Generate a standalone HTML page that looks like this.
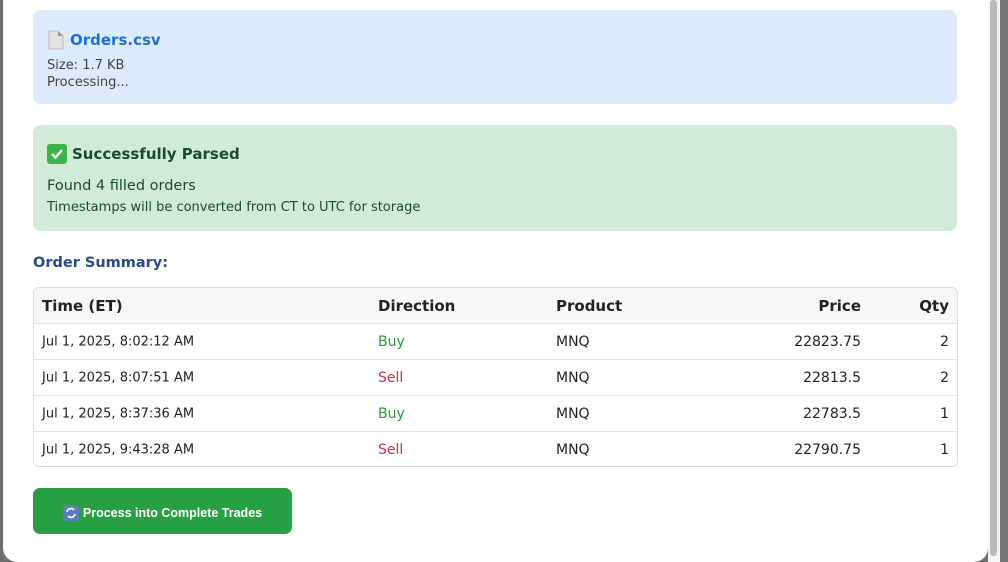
<!DOCTYPE html>
<html><head><meta charset="utf-8"><style>
*{box-sizing:border-box;margin:0;padding:0}
body{width:1008px;height:562px;overflow:hidden;background:#6e6e6e;font-family:"DejaVu Sans",Verdana,sans-serif;position:relative}
.modal{position:absolute;left:3px;top:-20px;width:985px;height:582px;background:#fff;border-radius:14px}
.sb{position:absolute;left:988px;top:0;width:12px;height:562px;background:#f4f4f4}
.sb i{position:absolute;left:2px;top:0;width:7px;height:556px;background:#b9b9b9;border-radius:4px}
.side{position:absolute;left:1000px;top:0;width:8px;height:562px;background:#777}
.blue{position:absolute;left:33px;top:10px;width:924px;height:94px;background:#dcebfb;border-radius:8px;padding:19px 14px}
.fn{font-weight:bold;color:#1f6fd0;font-size:15px;display:flex;align-items:center;gap:5px;height:22px}
.sm{font-size:13px;color:#444;line-height:17px}
.green{position:absolute;left:33px;top:125px;width:924px;height:106px;background:#d1ebd7;border-radius:8px;padding:18px 14px;color:#1c4b2a}
.gt{font-weight:bold;font-size:15px;display:flex;align-items:center;gap:5px;height:22px}
.ck{width:20px;height:20px;background:#3cb44a;border-radius:3px;display:inline-flex;align-items:center;justify-content:center}
h3{position:absolute;left:33px;top:255px;font-size:14.5px;color:#2a4a8a;font-weight:bold}
.tbl{position:absolute;left:33px;top:287px;width:925px;height:180px;border:1px solid #ddd;border-radius:6px;overflow:hidden}
.r{position:relative;height:36px;border-top:1px solid #e3e3e3;font-size:13px;color:#222}
.r:first-child{border-top:none;height:35px;background:#f6f7f8;font-weight:bold;font-size:15px}
.r span{position:absolute;top:50%;transform:translateY(-50%)}
.c1{left:8px}.c2{left:344px}.c3{left:522px}.c4{right:96px}.c5{right:8px}
.r:not(:first-child) .c2,.r:not(:first-child) .c3,.r:not(:first-child) .c4,.r:not(:first-child) .c5{font-size:14px}
.buy{color:#2a9a3a}.sell{color:#d0303c}
.btn{position:absolute;left:33px;top:488px;width:259px;height:46px;background:#27a043;border-radius:7px;color:#fff;font-weight:bold;font-size:12.5px;display:flex;align-items:center;justify-content:center;gap:4px;padding-top:4px;font-family:"Liberation Sans",Arial,sans-serif}
.ri{width:16px;height:16px;background:#5a7fb8;border-radius:3px;display:inline-flex;align-items:center;justify-content:center}
</style></head><body>
<div class="modal"></div>
<div class="sb"><i></i></div><div class="side"></div>
<div class="blue">
<div class="fn"><svg width="18" height="20" viewBox="0 0 18 20"><path d="M2 1h9l5 5v13H2z" fill="#e2e2e2" stroke="#bbb"/><path d="M11 1v5h5" fill="#999"/></svg>Orders.csv</div>
<div class="sm" style="margin-top:6px">Size: 1.7 KB</div>
<div class="sm">Processing...</div>
</div>
<div class="green">
<div class="gt"><span class="ck"><svg width="14" height="14" viewBox="0 0 14 14"><path d="M2 7l3.5 3.5L12 3" stroke="#fff" stroke-width="2.4" fill="none"/></svg></span>Successfully Parsed</div>
<div style="font-size:14.5px;margin-top:11px;line-height:20px">Found 4 filled orders</div>
<div style="font-size:13px;line-height:20px;margin-top:2px">Timestamps will be converted from CT to UTC for storage</div>
</div>
<h3>Order Summary:</h3>
<div class="tbl">
<div class="r"><span class="c1">Time (ET)</span><span class="c2">Direction</span><span class="c3">Product</span><span class="c4">Price</span><span class="c5">Qty</span></div>
<div class="r"><span class="c1">Jul 1, 2025, 8:02:12 AM</span><span class="c2 buy">Buy</span><span class="c3">MNQ</span><span class="c4">22823.75</span><span class="c5">2</span></div>
<div class="r"><span class="c1">Jul 1, 2025, 8:07:51 AM</span><span class="c2 sell">Sell</span><span class="c3">MNQ</span><span class="c4">22813.5</span><span class="c5">2</span></div>
<div class="r"><span class="c1">Jul 1, 2025, 8:37:36 AM</span><span class="c2 buy">Buy</span><span class="c3">MNQ</span><span class="c4">22783.5</span><span class="c5">1</span></div>
<div class="r"><span class="c1">Jul 1, 2025, 9:43:28 AM</span><span class="c2 sell">Sell</span><span class="c3">MNQ</span><span class="c4">22790.75</span><span class="c5">1</span></div>
</div>
<div class="btn"><span class="ri"><svg width="12" height="12" viewBox="0 0 12 12"><path d="M2 5a4 4 0 0 1 7-2M10 7a4 4 0 0 1-7 2" stroke="#fff" stroke-width="1.6" fill="none"/></svg></span>Process into Complete Trades</div>
</body></html>
